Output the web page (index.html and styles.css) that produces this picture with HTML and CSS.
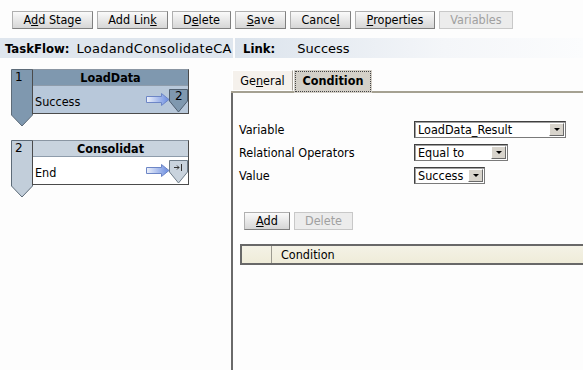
FILE: index.html
```html
<!DOCTYPE html>
<html lang="en">
<head>
<meta charset="UTF-8" />
<title>Task Flow</title>
<link rel="stylesheet" href="styles.css">
</head>
<body>
  <!-- Toolbar -->
  <div class="toolbar">
    <button class="btn btn-stage">A<u>d</u>d Stage</button>
    <button class="btn btn-link">Add Lin<u>k</u></button>
    <button class="btn btn-delete">D<u>e</u>lete</button>
    <button class="btn btn-save"><u>S</u>ave</button>
    <button class="btn btn-cancel">Cance<u>l</u></button>
    <button class="btn btn-props"><u>P</u>roperties</button>
    <button class="btn btn-vars" disabled>Variables</button>
  </div>

  <!-- Info bar -->
  <div class="infobar">
    <div class="info info-flow"><b>TaskFlow:</b><span>LoadandConsolidateCA</span></div>
    <div class="info info-link"><b>Link:</b><span>Success</span></div>
  </div>

  <div class="main">
    <!-- Stage canvas -->
    <div class="canvas">
      <div class="stage stage-active">
        <svg class="stage-tab" width="22" height="58" viewBox="0 0 22 58">
          <polygon points="0.5,0.5 21.5,0.5 21.5,46 11,57 0.5,46" />
          <text x="4" y="12">1</text>
        </svg>
        <div class="stage-box">
          <div class="stage-title">LoadData</div>
          <div class="stage-body">
            <span class="stage-link">Success</span>
            <svg class="arrow" width="24" height="13" viewBox="0 0 24 13">
              <defs>
                <linearGradient id="ag1" x1="0" x2="1">
                  <stop offset="0" stop-color="#eef2fb" />
                  <stop offset="1" stop-color="#6a8ce0" />
                </linearGradient>
              </defs>
              <polygon points="0.5,3.5 15.5,3.5 15.5,0.5 23,6.5 15.5,12.5 15.5,9.5 0.5,9.5" fill="url(#ag1)" stroke="#6d86c6" />
            </svg>
            <svg class="badge" width="19" height="24" viewBox="0 0 19 24">
              <polygon points="0.5,0.5 18.5,0.5 18.5,12 9.5,23 0.5,12" fill="#7f98af" stroke="#4f5f70" />
              <text x="6" y="11">2</text>
            </svg>
          </div>
        </div>
      </div>

      <div class="stage">
        <svg class="stage-tab" width="22" height="58" viewBox="0 0 22 58">
          <polygon points="0.5,0.5 21.5,0.5 21.5,46 11,57 0.5,46" />
          <text x="4" y="12">2</text>
        </svg>
        <div class="stage-box">
          <div class="stage-title">Consolidat</div>
          <div class="stage-body">
            <span class="stage-link">End</span>
            <svg class="arrow" width="24" height="13" viewBox="0 0 24 13">
              <defs>
                <linearGradient id="ag2" x1="0" x2="1">
                  <stop offset="0" stop-color="#eef2fb" />
                  <stop offset="1" stop-color="#6a8ce0" />
                </linearGradient>
              </defs>
              <polygon points="0.5,3.5 15.5,3.5 15.5,0.5 23,6.5 15.5,12.5 15.5,9.5 0.5,9.5" fill="url(#ag2)" stroke="#6d86c6" />
            </svg>
            <svg class="badge" width="19" height="24" viewBox="0 0 19 24">
              <polygon points="0.5,0.5 18.5,0.5 18.5,12 9.5,23 0.5,12" fill="#c9d3dd" stroke="#6f7d8a" />
              <path d="M5 7.5 H10 M8 5.5 L10 7.5 L8 9.5 M12.5 4 V11" stroke="#333" fill="none" />
            </svg>
          </div>
        </div>
      </div>
    </div>

    <!-- Link editor -->
    <div class="editor">
      <div class="tabs">
        <div class="tab">Ge<u>n</u>eral</div>
        <div class="tab tab-active"><span>Condition</span></div>
      </div>
      <div class="panel">
        <div class="form">
          <label>Variable</label>
          <div class="select sel-var"><span>LoadData_Result</span><i></i></div>
          <label>Relational Operators</label>
          <div class="select sel-op"><span>Equal to</span><i></i></div>
          <label>Value</label>
          <div class="select sel-val"><span>Success</span><i></i></div>
        </div>

        <div class="actions">
          <button class="btn btn-add"><u>A</u>dd</button>
          <button class="btn btn-del" disabled>Delete</button>
        </div>

        <div class="grid-head">
          <div class="cell cell-sel"></div>
          <div class="cell">Condition</div>
        </div>
      </div>
    </div>
  </div>
</body>
</html>
```

FILE: styles.css
```css
* {
  margin: 0;
  padding: 0;
  box-sizing: border-box;
}

html, body {
  height: 100%;
  overflow: hidden;
  background: #fdfdfd;
  font-family: 'DejaVu Sans Condensed', 'DejaVu Sans', sans-serif;
  font-size: 12px;
  color: #000;
}

/* Toolbar */
.toolbar {
  display: flex;
  gap: 4px;
  padding: 11px 0 0 12px;
  height: 38px;
}

.btn {
  height: 18px;
  font: inherit;
  font-size: 12.5px;
  line-height: 14px;
  color: #000;
  background: linear-gradient(#fafafa, #e4e4e4 60%, #d6d6d6);
  border: 1px solid #b0b0b0;
  border-right-color: #808080;
  border-bottom-color: #808080;
  padding: 0 6px;
}

.btn[disabled] {
  color: #a0a0a0;
  background: #ececec;
  border-color: #c8c8c8;
}

.btn-stage { width: 81px; }
.btn-link { width: 71px; }
.btn-delete { width: 59px; }
.btn-save { width: 51px; }
.btn-cancel { width: 61px; }
.btn-props { width: 80px; }
.btn-vars { width: 74px; }

/* Info bar */
.infobar {
  display: flex;
  gap: 2px;
  height: 20px;
}

.info {
  display: flex;
  align-items: center;
  font-size: 13px;
}

.info b { font-weight: bold; }

.info span {
  font-family: 'DejaVu Sans', sans-serif;
  font-size: 13px;
  letter-spacing: 0.25px;
}

.info-flow {
  width: 233px;
  padding-left: 5px;
  background: #dfe6ee;
}

.info-flow span { margin-left: 7px; }

.info-link {
  flex: 1;
  padding-left: 8px;
  background: linear-gradient(to right, #dbe3ec, #f4f6f9 60%, #fbfcfd);
}

.info-link span { margin-left: 22px; letter-spacing: 0; }

/* Main area */
.main {
  display: flex;
  height: 312px;
}

.canvas {
  width: 231px;
  padding: 11px 0 0 11px;
  display: flex;
  flex-direction: column;
  gap: 13px;
}

.stage {
  display: flex;
  align-items: flex-start;
}

.stage-tab polygon {
  fill: #c2ceda;
  stroke: #5d6b78;
}

.stage-active .stage-tab polygon { fill: #7f98af; }

.stage-tab text,
.badge text {
  font-family: 'DejaVu Sans', sans-serif;
  font-size: 12px;
  fill: #000;
}

.stage-box {
  width: 157px;
  margin-left: -1px;
  border: 1px solid #4b4b4b;
  border-top-color: #8a96a3;
}

.stage-title {
  height: 16px;
  line-height: 15px;
  text-align: center;
  font-weight: bold;
  font-size: 12.5px;
  background: #c8d3de;
  border-bottom: 1px solid #8e9cab;
}

.stage-active .stage-title { background: #7f98af; }

.stage-body {
  display: flex;
  align-items: flex-start;
  height: 27px;
  padding-left: 2px;
  background: #fff;
}

.stage-active .stage-body { background: #b8c8da; }

.stage-link {
  flex: 1;
  margin-top: 8px;
  font-size: 12.5px;
}

.arrow {
  margin-top: 7px;
  margin-right: -1px;
}

.badge {
  margin-top: 3px;
}

/* Editor */
.editor {
  flex: 1;
  padding-top: 12px;
  display: flex;
  flex-direction: column;
}

.tabs {
  display: flex;
  align-items: flex-end;
  gap: 1px;
  padding-left: 1px;
  height: 23px;
  border-bottom: 2px solid #a5a192;
}

.tab {
  height: 21px;
  width: 61px;
  line-height: 20px;
  text-align: center;
  font-size: 12.5px;
  background: #f5f1ec;
  border: 1px solid #fff;
  border-right-color: #aaa49a;
}

.tab-active {
  width: 78px;
  height: 23px;
  margin-bottom: -2px;
  padding: 1px;
  font-weight: bold;
  background: #d4d0c8;
  border: none;
}

.tab-active span {
  display: block;
  height: 21px;
  line-height: 18px;
  border: 1px dotted #444;
}

.panel {
  flex: 1;
  border-left: 2px solid #6a6a6a;
  padding: 28px 0 0 6px;
}

.form {
  display: grid;
  grid-template-columns: 175px auto;
  row-gap: 6px;
  align-items: center;
}

.form label { font-size: 12.5px; }

.select {
  display: flex;
  align-items: center;
  height: 17px;
  background: #fff;
  border: 1px solid #7a7a7a;
  border-top-color: #404040;
  border-left-color: #404040;
  box-shadow: inset 1px 1px 0 #a0a0a0;
}

.select span {
  flex: 1;
  padding-left: 3px;
  font-size: 12.5px;
  white-space: nowrap;
}

.select i {
  display: block;
  position: relative;
  width: 15px;
  height: 13px;
  margin-right: 1px;
  background: #d8d4cc;
  border: 1px solid #fff;
  border-right-color: #6a6a6a;
  border-bottom-color: #6a6a6a;
}

/* small triangle inside the drop-down button */
.select i::after {
  content: "";
  position: absolute;
  left: 4px;
  top: 4px;
  border-left: 3px solid transparent;
  border-right: 3px solid transparent;
  border-top: 3px solid #000;
}

.sel-var { width: 152px; }
.sel-op { width: 94px; }
.sel-val { width: 71px; }

.actions {
  display: flex;
  gap: 4px;
  margin: 28px 0 0 5px;
}

.btn-add { width: 46px; }
.btn-del { width: 59px; }

.grid-head {
  display: flex;
  height: 21px;
  margin: 14px 0 0 1px;
  background: linear-gradient(#f4f2e6, #efecd9);
  border: 2px solid #686868;
  border-right: none;
}

.cell {
  display: flex;
  align-items: center;
  padding-left: 9px;
  font-size: 12.5px;
}

.cell-sel {
  width: 30px;
  padding: 0;
  border-right: 1px solid #9c9a90;
}
```
